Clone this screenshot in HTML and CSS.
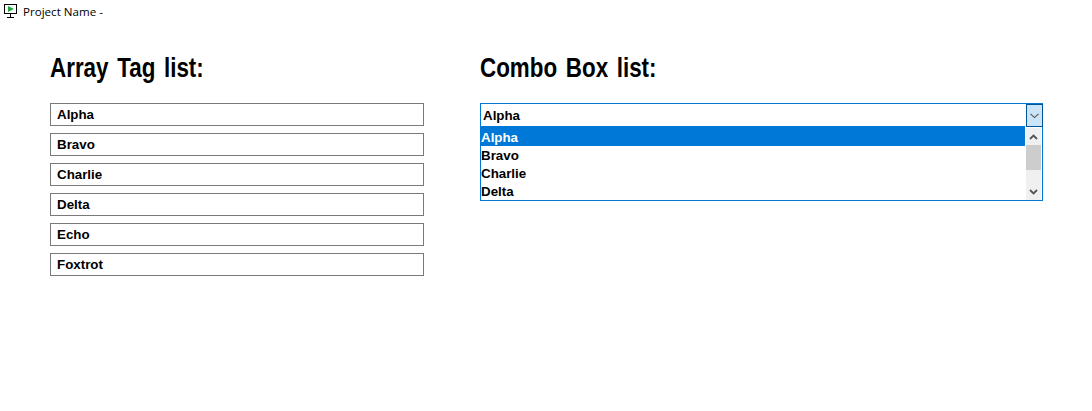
FILE: index.html
```html
<!DOCTYPE html>
<html lang="en">
<head>
<meta charset="utf-8">
<title>Project Name</title>
<link rel="stylesheet" href="styles.css">
</head>
<body>
<header class="titlebar">
  <svg class="app-icon" width="14" height="14" viewBox="0 0 14 14" aria-hidden="true">
    <rect x="0.5" y="0.5" width="12" height="9" fill="#fff" stroke="#000"/>
    <path d="M4 2 L4 8 L10 5 Z" fill="#1fa33a"/>
    <path d="M6.5 10 V13 M3 13.5 H10" stroke="#000" fill="none"/>
  </svg>
  <span class="title-text">Project Name -</span>
</header>
<main class="content">
  <section class="col col-tags">
    <h1 class="heading"><span class="heading-text">Array Tag list:</span></h1>
    <ul class="tag-list">
      <li class="tag">Alpha</li>
      <li class="tag">Bravo</li>
      <li class="tag">Charlie</li>
      <li class="tag">Delta</li>
      <li class="tag">Echo</li>
      <li class="tag">Foxtrot</li>
    </ul>
  </section>
  <section class="col col-combo">
    <h1 class="heading"><span class="heading-text">Combo Box list:</span></h1>
    <div class="combo">
      <div class="combo-head">
        <span class="combo-value">Alpha</span>
        <span class="combo-btn">
          <svg width="9" height="6" viewBox="0 0 9 6" aria-hidden="true"><path d="M0.5 0.8 L4.5 4.6 L8.5 0.8" fill="none" stroke="#555" stroke-width="1.1"/></svg>
        </span>
      </div>
      <div class="combo-drop">
        <ul class="options">
          <li class="option selected">Alpha</li>
          <li class="option">Bravo</li>
          <li class="option">Charlie</li>
          <li class="option">Delta</li>
        </ul>
        <div class="scrollbar">
          <span class="arrow">
            <svg width="9" height="6" viewBox="0 0 9 6" aria-hidden="true"><path d="M1 5 L4.5 1.5 L8 5" fill="none" stroke="#555" stroke-width="1.8"/></svg>
          </span>
          <span class="thumb"></span>
          <span class="track"></span>
          <span class="arrow">
            <svg width="9" height="6" viewBox="0 0 9 6" aria-hidden="true"><path d="M1 1 L4.5 4.5 L8 1" fill="none" stroke="#555" stroke-width="1.8"/></svg>
          </span>
        </div>
      </div>
    </div>
  </section>
</main>
</body>
</html>
```

FILE: styles.css
```css
* { box-sizing: border-box; }

html, body {
  margin: 0;
  padding: 0;
  background: #fff;
  color: #000;
  font-family: "Liberation Sans", Arial, sans-serif;
}

body {
  width: 1092px;
  height: 411px;
  overflow: hidden;
}

.titlebar {
  display: flex;
  align-items: flex-start;
  height: 24px;
  padding: 4px 0 0 4px;
}

.app-icon { flex: none; }

.title-text {
  margin-left: 5px;
  margin-top: -1px;
  font-family: "Open Sans", sans-serif;
  font-size: 11.6px;
  line-height: 18px;
}

.content {
  display: flex;
  padding: 0 0 0 50px;
  gap: 56px;
}

.col-tags { width: 374px; }
.col-combo { width: 563px; }

.heading {
  height: 61px;
  margin: 0 0 18px;
  padding-top: 26px;
  font-size: 28px;
  line-height: 35px;
  font-weight: 700;
  white-space: nowrap;
}

.heading-text {
  display: inline-block;
  transform: scaleX(0.8);
  transform-origin: left center;
  word-spacing: 3px;
}

.tag-list, .options {
  list-style: none;
  margin: 0;
  padding: 0;
}

.tag-list {
  display: flex;
  flex-direction: column;
  gap: 7px;
}

.tag {
  height: 23px;
  padding-left: 6px;
  border: 1px solid #7a7a7a;
  font-size: 13.33px;
  font-weight: 700;
  line-height: 21px;
}

.combo {
  display: flex;
  flex-direction: column;
  height: 98px;
  border: 1px solid #0078d7;
}

.combo-head {
  display: flex;
  flex: none;
  justify-content: space-between;
  height: 22px;
}

.combo-value {
  padding-left: 2px;
  font-size: 13.33px;
  font-weight: 700;
  line-height: 23px;
}

.combo-btn {
  display: flex;
  align-items: center;
  justify-content: center;
  flex: none;
  width: 17px;
  height: 23px;
  margin-right: -1px;
  background: #cce4f7;
  border: 1px solid #005499;
}

.combo-drop {
  display: flex;
  flex: 1;
  min-height: 0;
}

.options {
  flex: 1;
}

.option {
  height: 18px;
  padding-top: 1px;
  font-size: 13.33px;
  font-weight: 700;
  line-height: 18px;
}

.option.selected {
  height: 20px;
  margin-right: 1px;
  padding-top: 3px;
  background: #0078d7;
  color: #fff;
}

.scrollbar {
  display: flex;
  flex-direction: column;
  flex: none;
  width: 15px;
  margin: 2px 1px 0 0;
  background: #f0f0f0;
}

.arrow {
  display: flex;
  align-items: center;
  justify-content: center;
  flex: none;
  height: 17px;
}

.thumb {
  flex: none;
  height: 25px;
  background: #cdcdcd;
}

.track { flex: 1; }
```
